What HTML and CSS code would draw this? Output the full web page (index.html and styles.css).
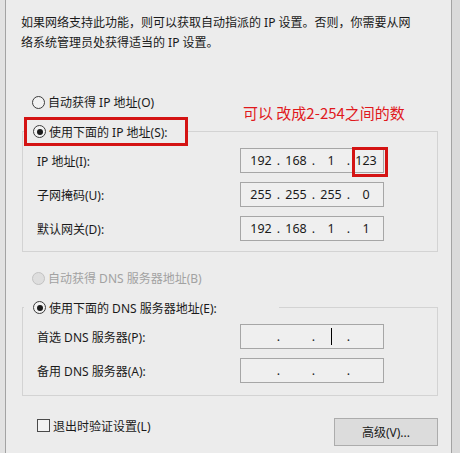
FILE: index.html
```html
<!DOCTYPE html>
<html lang="zh-CN">
<head>
<meta charset="utf-8">
<title>IP 设置</title>
<link rel="stylesheet" href="styles.css">
</head>
<body>
<div class="screen">
  <div class="edge-left"></div>
  <div class="panel">
    <p class="desc">如果网络支持此功能，则可以获取自动指派的 IP 设置。否则，你需要从网<br>络系统管理员处获得适当的 IP 设置。</p>
    <div class="note">可以 改成2-254之间的数</div>

    <div class="radio-row row-auto-ip"><span class="radio"></span><span>自动获得 IP 地址(O)</span></div>

    <fieldset class="group group-ip">
      <legend class="legend legend-ip"><span class="radio checked"></span><span>使用下面的 IP 地址(S):</span></legend>
      <div class="field first">
        <span class="label">IP 地址(I):</span>
        <div class="ipbox">
          <span class="octet">192</span><span class="dot">.</span><span class="octet">168</span><span class="dot">.</span><span class="octet">1</span><span class="dot">.</span><span class="octet marked">123</span>
        </div>
      </div>
      <div class="field">
        <span class="label">子网掩码(U):</span>
        <div class="ipbox">
          <span class="octet">255</span><span class="dot">.</span><span class="octet">255</span><span class="dot">.</span><span class="octet">255</span><span class="dot">.</span><span class="octet">0</span>
        </div>
      </div>
      <div class="field">
        <span class="label">默认网关(D):</span>
        <div class="ipbox">
          <span class="octet">192</span><span class="dot">.</span><span class="octet">168</span><span class="dot">.</span><span class="octet">1</span><span class="dot">.</span><span class="octet">1</span>
        </div>
      </div>
    </fieldset>

    <div class="radio-row row-auto-dns disabled"><span class="radio"></span><span>自动获得 DNS 服务器地址(B)</span></div>

    <fieldset class="group group-dns">
      <legend class="legend legend-dns"><span class="radio checked"></span><span>使用下面的 DNS 服务器地址(E):</span></legend>
      <div class="field first">
        <span class="label">首选 DNS 服务器(P):</span>
        <div class="ipbox">
          <span class="octet"></span><span class="dot">.</span><span class="octet"></span><span class="dot">.</span><span class="octet"><span class="caret"></span></span><span class="dot">.</span><span class="octet"></span>
        </div>
      </div>
      <div class="field">
        <span class="label">备用 DNS 服务器(A):</span>
        <div class="ipbox">
          <span class="octet"></span><span class="dot">.</span><span class="octet"></span><span class="dot">.</span><span class="octet"></span><span class="dot">.</span><span class="octet"></span>
        </div>
      </div>
    </fieldset>

    <div class="bottom-row">
      <div class="check-row"><span class="checkbox"></span><span>退出时验证设置(L)</span></div>
      <button class="btn" type="button">高级(V)...</button>
    </div>
  </div>
  <div class="edge-right"></div>
</div>
</body>
</html>
```

FILE: styles.css
```css
* { box-sizing: border-box; }

html, body {
  margin: 0;
  padding: 0;
  background: #ffffff;
}

body {
  width: 460px;
  height: 457px;
  overflow: hidden;
  font-family: "Noto Sans", "Noto Sans CJK SC", sans-serif;
  font-size: 12px;
  color: #1a1a1a;
}

.screen {
  display: flex;
  height: 453px;
}

.edge-left {
  width: 5px;
  background: #e2e2e2;
}

.edge-right {
  width: 8px;
  background: #dadada;
}

.panel {
  position: relative;
  flex: 1;
  background: #ececec;
  border-left: 1px solid #a3a3a3;
  border-right: 1px solid #a3a3a3;
}

.desc {
  margin: 0;
  padding: 13px 0 0 15px;
  line-height: 20px;
  white-space: nowrap;
}

.note {
  position: absolute;
  left: 237px;
  top: 102px;
  font-family: "Noto Sans CJK SC", sans-serif;
  font-size: 15px;
  line-height: 22px;
  color: #e0181c;
  white-space: nowrap;
}

.radio-row {
  display: flex;
  align-items: center;
  height: 20px;
  padding-left: 26px;
  white-space: nowrap;
}

.row-auto-ip { margin-top: 39px; }
.row-auto-dns { margin-top: 16px; }

.radio-row.disabled { color: #a2a2a2; }
.radio-row.disabled .radio {
  border-color: #c2c2c2;
  background: #dedede;
}

.radio {
  display: inline-block;
  flex: none;
  width: 13px;
  height: 13px;
  margin-right: 3px;
  border: 1px solid #3c3c3c;
  border-radius: 50%;
  background: #f2f2f2;
  position: relative;
}

.radio.checked::after {
  content: "";
  position: absolute;
  left: 2.5px;
  top: 2.5px;
  width: 6px;
  height: 6px;
  border-radius: 50%;
  background: #1a1a1a;
}

.group {
  margin: 0 13px 0 16px;
  padding: 0 0 10px 0;
  border: 1px solid #d3d3d3;
  min-width: 0;
}

.group-ip { margin-top: 5px; padding-bottom: 10px; }
.group-dns { margin-top: 5px; padding-bottom: 12px; }

.legend {
  display: flex;
  align-items: center;
  height: 29px;
  margin-left: 1px;
  padding: 0 0 0 6px;
  border: 3px solid transparent;
  white-space: nowrap;
}

.legend-ip {
  width: 164px;
  border-color: #d41313;
}

.legend-dns { width: 255px; }

.field {
  display: flex;
  align-items: center;
  height: 25px;
  margin-top: 9px;
  padding-left: 14px;
}

.field.first { margin-top: 2px; }

.label {
  width: 203px;
  flex: none;
  white-space: nowrap;
}

.ipbox {
  display: flex;
  align-items: center;
  width: 144px;
  height: 25px;
  padding-left: 6px;
  border: 1px solid #a6a6a6;
  background: #efefef;
  font-size: 12.5px;
}

.octet {
  position: relative;
  display: flex;
  align-items: center;
  justify-content: center;
  width: 28px;
  height: 23px;
}

.dot {
  width: 7px;
  text-align: center;
  line-height: 23px;
}

.octet.marked::after {
  content: "";
  position: absolute;
  left: 0;
  top: -2px;
  width: 30px;
  height: 24px;
  border: 3px solid #d41313;
}

.caret {
  display: inline-block;
  width: 1px;
  height: 17px;
  margin-left: 1px;
  background: #000;
}

.bottom-row {
  display: flex;
  justify-content: space-between;
  align-items: flex-start;
  margin: 22px 13px 0 31px;
}

.check-row {
  display: flex;
  align-items: center;
  height: 15px;
  white-space: nowrap;
}

.checkbox {
  display: inline-block;
  width: 13px;
  height: 13px;
  margin-right: 3px;
  border: 1px solid #4a4a4a;
  background: #f3f3f3;
}

.btn {
  width: 104px;
  height: 28px;
  margin: 0;
  padding: 0;
  border: 1px solid #acacac;
  background: #dcdcdc;
  font-family: "Noto Sans", "Noto Sans CJK SC", sans-serif;
  font-size: 12px;
  color: #1a1a1a;
}
```
